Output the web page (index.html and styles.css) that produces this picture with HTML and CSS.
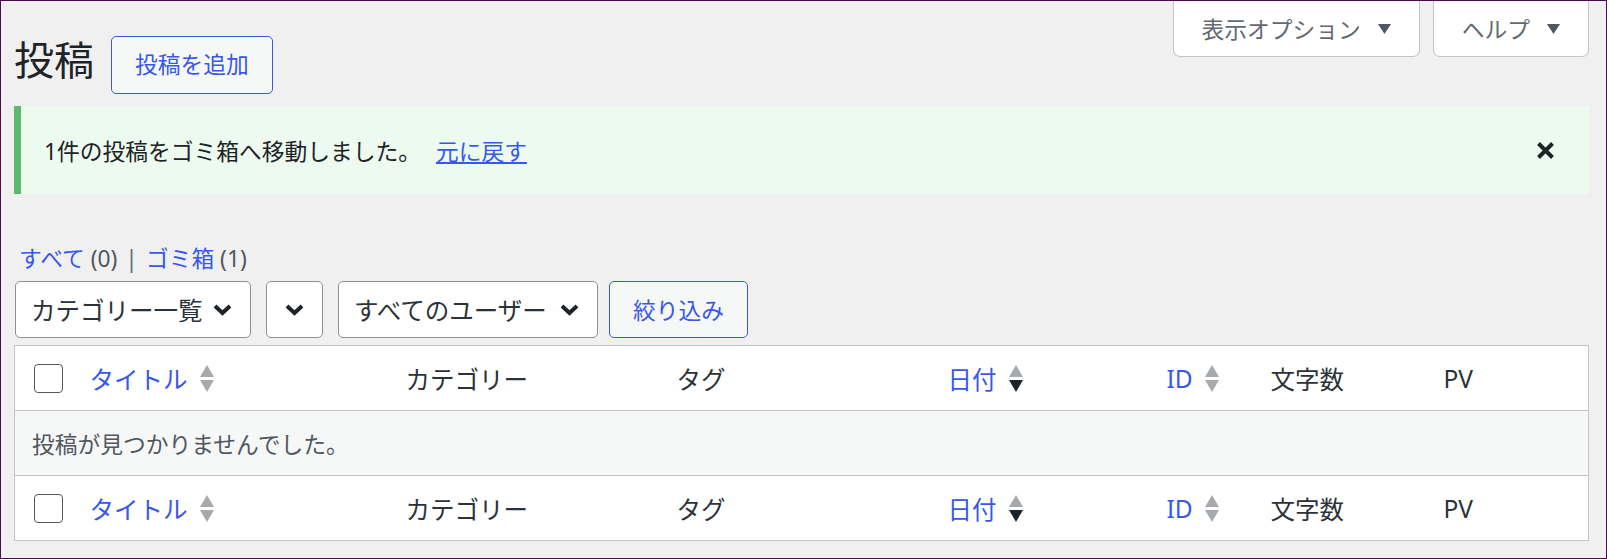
FILE: index.html
```html
<!DOCTYPE html>
<html lang="ja">
<head>
    <meta charset="UTF-8">
    <meta name="viewport" content="width=device-width, initial-scale=1.0">
    <title>投稿</title>
    <link rel="stylesheet" href="styles.css">
</head>
<body>
    <div class="page">
        <div class="screen-links">
            <button class="screen-tab">表示オプション
                <svg class="tab-arrow" width="13" height="10" viewBox="0 0 13 10"><polygon points="0,0 13,0 6.5,10"/></svg>
            </button>
            <button class="screen-tab">ヘルプ
                <svg class="tab-arrow" width="13" height="10" viewBox="0 0 13 10"><polygon points="0,0 13,0 6.5,10"/></svg>
            </button>
        </div>

        <div class="title-row">
            <h1>投稿</h1>
            <a class="add-new" href="#">投稿を追加</a>
        </div>

        <div class="notice">
            <p>1件の投稿をゴミ箱へ移動しました。 <a class="undo" href="#">元に戻す</a></p>
            <button class="notice-dismiss">
                <svg width="19" height="19" viewBox="0 0 19 19"><path d="M2.5 2.5 L16.5 16.5 M16.5 2.5 L2.5 16.5"/></svg>
            </button>
        </div>

        <ul class="subsubsub">
            <li><a href="#">すべて</a> <span class="count">(0)</span><span class="sep">|</span></li>
            <li><a href="#">ゴミ箱</a> <span class="count">(1)</span></li>
        </ul>

        <div class="tablenav">
            <div class="select select-cat">カテゴリー一覧
                <svg class="chevron" width="19" height="12" viewBox="0 0 19 12"><polyline points="2,2 9.5,9 17,2"/></svg>
            </div>
            <div class="select select-date">
                <svg class="chevron" width="19" height="12" viewBox="0 0 19 12"><polyline points="2,2 9.5,9 17,2"/></svg>
            </div>
            <div class="select select-user">すべてのユーザー
                <svg class="chevron" width="19" height="12" viewBox="0 0 19 12"><polyline points="2,2 9.5,9 17,2"/></svg>
            </div>
            <button class="filter-btn">絞り込み</button>
        </div>

        <table class="posts">
            <colgroup>
                <col class="col-cb">
                <col class="col-title">
                <col class="col-cat">
                <col class="col-tag">
                <col class="col-date">
                <col class="col-id">
                <col class="col-chars">
                <col>
            </colgroup>
            <thead>
                <tr>
                    <th class="cb"><span class="check"></span></th>
                    <th><a class="sort" href="#">タイトル
                        <svg width="14" height="27" viewBox="0 0 14 27"><polygon class="off" points="7,0 14,12 0,12"/><polygon class="off" points="0,15 14,15 7,27"/></svg></a></th>
                    <th>カテゴリー</th>
                    <th>タグ</th>
                    <th><a class="sort" href="#">日付
                        <svg width="14" height="27" viewBox="0 0 14 27"><polygon class="off" points="7,0 14,12 0,12"/><polygon class="on" points="0,15 14,15 7,27"/></svg></a></th>
                    <th><a class="sort" href="#">ID
                        <svg width="14" height="27" viewBox="0 0 14 27"><polygon class="off" points="7,0 14,12 0,12"/><polygon class="off" points="0,15 14,15 7,27"/></svg></a></th>
                    <th>文字数</th>
                    <th>PV</th>
                </tr>
            </thead>
            <tbody>
                <tr class="no-items">
                    <td colspan="8">投稿が見つかりませんでした。</td>
                </tr>
            </tbody>
            <tfoot>
                <tr>
                    <th class="cb"><span class="check"></span></th>
                    <th><a class="sort" href="#">タイトル
                        <svg width="14" height="27" viewBox="0 0 14 27"><polygon class="off" points="7,0 14,12 0,12"/><polygon class="off" points="0,15 14,15 7,27"/></svg></a></th>
                    <th>カテゴリー</th>
                    <th>タグ</th>
                    <th><a class="sort" href="#">日付
                        <svg width="14" height="27" viewBox="0 0 14 27"><polygon class="off" points="7,0 14,12 0,12"/><polygon class="on" points="0,15 14,15 7,27"/></svg></a></th>
                    <th><a class="sort" href="#">ID
                        <svg width="14" height="27" viewBox="0 0 14 27"><polygon class="off" points="7,0 14,12 0,12"/><polygon class="off" points="0,15 14,15 7,27"/></svg></a></th>
                    <th>文字数</th>
                    <th>PV</th>
                </tr>
            </tfoot>
        </table>
    </div>
</body>
</html>
```

FILE: styles.css
```css
body {
    margin: 0;
    height: 100vh;
    box-sizing: border-box;
    border: 1px solid #4b0b4b;
    background: #f0f0f1;
    font-family: "Noto Sans", "Noto Sans CJK JP", sans-serif;
    font-size: 22.75px;
    color: #3c434a;
    overflow: hidden;
}
.page {
    padding: 0 17px 0 13px;
}
a {
    color: #3858e9;
}

/* top right tabs */
.screen-links {
    float: right;
    display: flex;
    gap: 13px;
}
.screen-tab {
    height: 56px;
    box-sizing: border-box;
    display: flex;
    align-items: center;
    gap: 17px;
    padding: 0 28px;
    background: #fff;
    border: 1px solid #c3c4c7;
    border-top: 0;
    border-radius: 0 0 7px 7px;
    font: inherit;
    color: #646970;
}
.tab-arrow {
    fill: #50575e;
}

/* heading */
.title-row {
    display: flex;
    align-items: flex-start;
    padding-top: 34px;
}
.title-row h1 {
    margin: 0;
    font-size: 40px;
    font-weight: 400;
    line-height: 50px;
    color: #1d2327;
}
.add-new {
    margin: 1px 0 0 17px;
    height: 58px;
    box-sizing: border-box;
    padding: 0 23px;
    border: 1px solid #3858e9;
    border-radius: 5px;
    background: #f6f7f7;
    line-height: 56px;
    text-decoration: none;
}

/* notice */
.notice {
    clear: both;
    margin-top: 12px;
    height: 88px;
    display: flex;
    align-items: center;
    justify-content: space-between;
    background: #edfaef;
    border-left: 7px solid #5ab96a;
    padding: 0 34px 0 23px;
}
.notice p {
    margin: 0;
    color: #1d2327;
}
.undo {
    margin-left: 9px;
}
.notice-dismiss {
    border: 0;
    padding: 0;
    background: none;
    display: flex;
}
.notice-dismiss path {
    stroke: #1d2327;
    stroke-width: 4;
    fill: none;
}

/* status links */
.subsubsub {
    margin: 49px 0 0;
    padding: 0 0 0 5px;
    list-style: none;
    display: flex;
    line-height: 32px;
    color: #50575e;
}
.subsubsub a {
    text-decoration: none;
}
.sep {
    margin: 0 8px;
    color: #646970;
}

/* filters */
.tablenav {
    margin-top: 6px;
    display: flex;
    gap: 15px;
    padding-left: 1px;
}
.select {
    box-sizing: border-box;
    height: 57px;
    display: flex;
    align-items: center;
    justify-content: space-between;
    padding: 0 18px 0 15px;
    border: 1px solid #8c8f94;
    border-radius: 5px;
    background: #fff;
    font-size: 24.5px;
    color: #2c3338;
}
.select-cat {
    width: 236px;
}
.select-date {
    width: 57px;
    padding: 0;
    justify-content: center;
}
.select-user {
    width: 260px;
}
.chevron polyline {
    fill: none;
    stroke: #1d2327;
    stroke-width: 4;
}
.filter-btn {
    width: 139px;
    height: 57px;
    margin-left: -4px;
    border: 1px solid #3858e9;
    border-radius: 5px;
    background: #f6f7f7;
    color: #3858e9;
    font: inherit;
}

/* list table */
.posts {
    margin-top: 7px;
    width: 100%;
    border-collapse: collapse;
    table-layout: fixed;
    border: 1px solid #c3c4c7;
    background: #fff;
}
.col-cb { width: 58px; }
.col-title { width: 316px; }
.col-cat { width: 271px; }
.col-tag { width: 271px; }
.col-date { width: 219px; }
.col-id { width: 104px; }
.col-chars { width: 173px; }

.posts th,
.posts td {
    height: 64px;
    padding: 0 17px;
    text-align: left;
    font-weight: 400;
    font-size: 24.5px;
    color: #2c3338;
    white-space: nowrap;
}
.posts thead th {
    border-bottom: 1px solid #c3c4c7;
}
.posts tfoot th {
    border-top: 1px solid #c3c4c7;
}
.posts th.cb {
    padding: 0 0 0 19px;
}
.check {
    display: block;
    width: 29px;
    height: 29px;
    box-sizing: border-box;
    border: 1px solid #50575e;
    border-radius: 4px;
    background: #fff;
}
.sort {
    display: inline-flex;
    align-items: center;
    gap: 12px;
    text-decoration: none;
    color: #3858e9;
}
.sort .off {
    fill: #a7aaad;
}
.sort .on {
    fill: #1d2327;
}
.no-items td {
    background: #f6f7f7;
    font-size: 22.75px;
    color: #50575e;
}
```
